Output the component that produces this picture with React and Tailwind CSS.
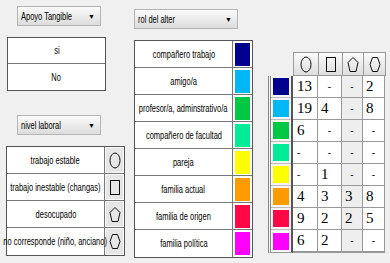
import React from "react";

const FONT = { fontFamily: '"Liberation Sans", Arial, sans-serif' };

const Shape = ({ kind, w = 12, h = 17 }) => (
  <svg width={w} height={h} viewBox="0 0 12 17" fill="none" stroke="#111" strokeWidth="1">
    {kind === "circle" && <ellipse cx="6" cy="8.5" rx="5" ry="7.5" />}
    {kind === "square" && <rect x="1.5" y="1.5" width="9" height="14" />}
    {kind === "pentagon" && <polygon points="6,1.5 11,6.5 9,15.5 3,15.5 1,6.5" />}
    {kind === "hexagon" && <polygon points="3.5,1.5 8.5,1.5 11,8.5 8.5,15.5 3.5,15.5 1,8.5" />}
  </svg>
);

// condensed label: scaled horizontally, as the narrow font isn't available
const Narrow = ({ children, left }) => (
  <span
    className={`inline-block whitespace-nowrap scale-x-[0.68] ${left ? "origin-left" : "origin-center"}`}
  >
    {children}
  </span>
);

const Dropdown = ({ label, className }) => (
  <div
    className={`flex items-center border border-[#b5b5b5] bg-gradient-to-b from-[#fbfbfb] to-[#dcdcdc] pl-[3px] pr-[5px] h-[20px] text-[11px] text-black ${className}`}
  >
    <div className="flex-1 min-w-0">
      <Narrow left>{label}</Narrow>
    </div>
    <span className="shrink-0 text-[7px] leading-none">▼</span>
  </div>
);

const work = [
  ["trabajo estable", "circle"],
  ["trabajo inestable (changas)", "square"],
  ["desocupado", "pentagon"],
  ["no corresponde (niño, anciano)", "hexagon"],
];

const roles = [
  ["compañero trabajo", "#00008f"],
  ["amigo/a", "#00b8f5"],
  ["profesor/a, adminstrativo/a", "#00c844"],
  ["compañero de facultad", "#00ec96"],
  ["pareja", "#ffff00"],
  ["familia actual", "#ff9a00"],
  ["familia de origen", "#ff0845"],
  ["familia política", "#ff00ff"],
];

const counts = [
  ["13", "-", "-", "2"],
  ["19", "4", "-", "8"],
  ["6", "-", "-", "-"],
  ["-", "-", "-", "-"],
  ["-", "1", "-", "-"],
  ["4", "3", "3", "8"],
  ["9", "2", "2", "5"],
  ["6", "2", "-", "-"],
];

const colW = ["w-[25px]", "w-[24px]", "w-[21px]", "w-[22px]"];

export default function App() {
  return (
    <div className="w-[390px] h-[263px] bg-[#f0f0f0] flex overflow-hidden" style={FONT}>
      {/* left column */}
      <div className="w-[130px] flex flex-col">
        <Dropdown label="Apoyo Tangible" className="ml-[17px] mt-[6px] w-[84px]" />
        <div className="ml-[7px] mt-[11px] w-[99px] border border-[#555] bg-white text-[11px]">
          <div className="h-[26px] flex items-center justify-center border-b border-[#777]">
            <Narrow>si</Narrow>
          </div>
          <div className="h-[26px] flex items-center justify-center">
            <Narrow>No</Narrow>
          </div>
        </div>
        <Dropdown label="nivel laboral" className="ml-[17px] mt-[24px] w-[84px]" />
        <div className="ml-[6px] mt-[11px] w-[119px] border border-[#555] bg-white text-[11px]">
          {work.map(([label, kind], i) => (
            <div
              key={label}
              className={`h-[27px] flex ${i < work.length - 1 ? "border-b border-[#777]" : ""}`}
            >
              <div className="flex-1 min-w-0 flex items-center justify-center border-r border-[#777]">
                <Narrow>{label}</Narrow>
              </div>
              <div className="w-[19px] shrink-0 flex items-center justify-center bg-[#e6e6e6] border border-[#fafafa]">
                <Shape kind={kind} />
              </div>
            </div>
          ))}
        </div>
      </div>

      {/* middle column */}
      <div className="ml-[4px] w-[134px] flex flex-col">
        <Dropdown label="rol del alter" className="mt-[9px] w-[104px]" />
        <div className="mt-[11px] w-[119px] border border-[#555] bg-white text-[11px]">
          {roles.map(([label, color], i) => (
            <div
              key={label}
              className={`h-[27px] flex ${i < roles.length - 1 ? "border-b border-[#777]" : ""}`}
            >
              <div className="flex-1 min-w-0 flex items-center justify-center border-r border-[#777]">
                <Narrow>{label}</Narrow>
              </div>
              <div className="w-[19px] shrink-0 flex items-center justify-center">
                <div className="w-[15px] h-[23px]" style={{ backgroundColor: color }} />
              </div>
            </div>
          ))}
        </div>
      </div>

      {/* right table */}
      <div className="flex flex-col mt-[52px]">
        <div className="flex ml-[25px] border-t border-l border-[#999]">
          {["circle", "square", "pentagon", "hexagon"].map((k, i) => (
            <div
              key={k}
              className={`${colW[i]} h-[23px] flex items-center justify-center border-r border-b border-[#999] bg-gradient-to-b from-[#fafafa] to-[#dedede]`}
            >
              <Shape kind={k} />
            </div>
          ))}
        </div>
        <div className="flex">
          <div className="w-[25px] flex flex-col border-l-[3px] border-double border-[#888] border-r-2 border-r-[#555] border-b border-b-[#999] bg-[#f4f4f4]">
            {roles.map(([label, color]) => (
              <div key={label} className="h-[22px] flex items-center justify-center border-b border-[#bbb] last:border-b-0">
                <div className="w-[16px] h-[17px]" style={{ backgroundColor: color }} />
              </div>
            ))}
          </div>
          <div className="flex flex-col border-b border-[#999]" style={{ fontFamily: '"Liberation Serif", "Times New Roman", serif' }}>
            {counts.map((row, r) => (
              <div key={r} className="flex h-[22px]">
                {row.map((v, c) => (
                  <div
                    key={c}
                    className={`${colW[c]} flex items-center ${v === "-" ? "justify-center text-[10px]" : "pl-[3px] text-[15px]"} border-r border-b border-[#999] ${c === 2 ? "bg-[#eeeeee]" : "bg-white"} ${c === 0 ? "justify-start pl-[4px]" : ""}`}
                  >
                    {v}
                  </div>
                ))}
              </div>
            ))}
          </div>
        </div>
      </div>
    </div>
  );
}
